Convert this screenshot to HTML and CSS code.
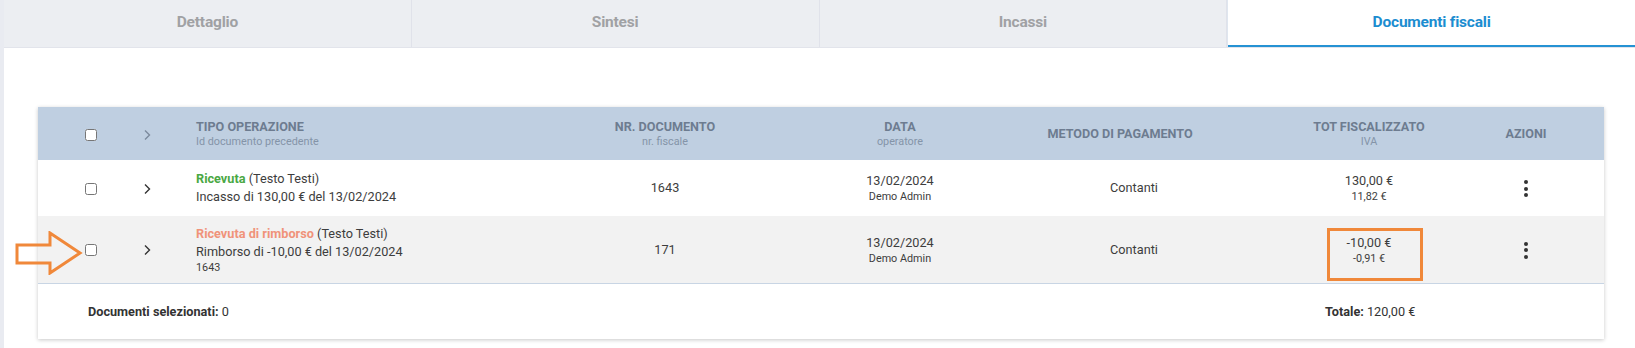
FILE: index.html
```html
<!DOCTYPE html>
<html lang="it">
<head>
  <meta charset="UTF-8">
  <meta name="viewport" content="width=device-width, initial-scale=1.0">
  <title>Documenti fiscali</title>
  <link rel="stylesheet" href="styles.css">
</head>
<body>
  <div class="page">
    <nav class="tabs">
      <div class="tab">Dettaglio</div>
      <div class="tab">Sintesi</div>
      <div class="tab">Incassi</div>
      <div class="tab active">Documenti fiscali</div>
    </nav>

    <div class="content">
      <!-- freccia di annotazione -->
      <svg class="note-arrow" width="68" height="44" viewBox="0 0 68 44">
        <polygon points="2,14 35,14 35,2 65,22 35,42 35,32 2,32" fill="none" stroke="#f0883a" stroke-width="3" stroke-linejoin="miter"/>
      </svg>

      <div class="card">
        <table class="docs-table">
          <colgroup>
            <col class="c-check">
            <col class="c-expand">
            <col class="c-tipo">
            <col class="c-nr">
            <col class="c-data">
            <col class="c-metodo">
            <col class="c-tot">
            <col class="c-azioni">
          </colgroup>
          <thead>
            <tr>
              <th class="cell-check"><input type="checkbox"></th>
              <th><svg class="chev" width="8" height="12" viewBox="0 0 8 12"><polyline points="2,1.5 6.5,6 2,10.5" fill="none" stroke="currentColor" stroke-width="1.4"/></svg></th>
              <th class="left">TIPO OPERAZIONE<span class="sub">Id documento precedente</span></th>
              <th>NR. DOCUMENTO<span class="sub">nr. fiscale</span></th>
              <th>DATA<span class="sub">operatore</span></th>
              <th>METODO DI PAGAMENTO</th>
              <th class="cell-tot">TOT FISCALIZZATO<span class="sub">IVA</span></th>
              <th class="cell-last">AZIONI</th>
            </tr>
          </thead>
          <tbody>
            <tr class="row-1">
              <td class="cell-check"><input type="checkbox"></td>
              <td><svg class="chev dark" width="8" height="12" viewBox="0 0 8 12"><polyline points="2,1.5 6.5,6 2,10.5" fill="none" stroke="currentColor" stroke-width="1.4"/></svg></td>
              <td class="left">
                <div><span class="tipo green">Ricevuta</span> (Testo Testi)</div>
                <div>Incasso di 130,00 € del 13/02/2024</div>
              </td>
              <td>1643</td>
              <td>13/02/2024<span class="small">Demo Admin</span></td>
              <td class="cell-metodo">Contanti</td>
              <td class="cell-tot">130,00 €<span class="small">11,82 €</span></td>
              <td class="cell-last"><span class="kebab"><i></i><i></i><i></i></span></td>
            </tr>
            <tr class="row-2">
              <td class="cell-check"><input type="checkbox"></td>
              <td><svg class="chev dark" width="8" height="12" viewBox="0 0 8 12"><polyline points="2,1.5 6.5,6 2,10.5" fill="none" stroke="currentColor" stroke-width="1.4"/></svg></td>
              <td class="left">
                <div><span class="tipo salmon">Ricevuta di rimborso</span> (Testo Testi)</div>
                <div>Rimborso di -10,00 € del 13/02/2024</div>
                <div class="small">1643</div>
              </td>
              <td>171</td>
              <td>13/02/2024<span class="small">Demo Admin</span></td>
              <td class="cell-metodo">Contanti</td>
              <td class="cell-tot">-10,00 €<span class="small">-0,91 €</span></td>
              <td class="cell-last"><span class="kebab"><i></i><i></i><i></i></span></td>
            </tr>
          </tbody>
        </table>

        <div class="table-footer">
          <span><strong>Documenti selezionati:</strong> 0</span>
          <span><strong>Totale:</strong> 120,00 €</span>
        </div>

        <!-- riquadro di evidenziazione -->
        <div class="note-box"></div>
      </div>
    </div>
  </div>
</body>
</html>
```

FILE: styles.css
```css
body {
  margin: 0;
  font-family: Roboto, "Liberation Sans", Arial, sans-serif;
  background-color: #e9ebf1;
  color: #3a3a3a;
}

.page {
  margin-left: 4px;
  background-color: #fff;
  min-height: 100vh;
}

/* tabs */
.tabs {
  display: flex;
  height: 48px;
  box-sizing: border-box;
  border-bottom: 1px solid #e2e4eb;
  background-color: #eceef2;
}

.tab {
  flex: 1;
  display: flex;
  align-items: center;
  justify-content: center;
  padding-bottom: 3px;
  font-size: 15.5px;
  font-weight: 700;
  letter-spacing: -0.2px;
  color: #a0a1a4;
  border-right: 1px solid #e0e2ea;
}

.tab.active {
  background-color: #fff;
  color: #1c8dd0;
  border-right: none;
  border-left: 1px solid #dfe6ef;
  box-shadow: inset 0 -2px 0 #2592d3;
}

/* content */
.content {
  position: relative;
  padding: 59px 31px 0 34px;
}

.card {
  position: relative;
  background-color: #fff;
  box-shadow: 0 1px 4px rgba(0, 0, 0, 0.22);
}

.docs-table {
  width: 100%;
  border-collapse: collapse;
  table-layout: fixed;
}

.c-check { width: 83px; }
.c-expand { width: 52px; }
.c-tipo { width: 375px; }
.c-nr { width: 234px; }
.c-data { width: 236px; }
.c-metodo { width: 204px; }
.c-tot { width: 228px; }
.c-azioni { width: 154px; }

th, td {
  padding: 0;
  text-align: center;
  vertical-align: middle;
}

th {
  height: 53px;
  background-color: #bfcfe1;
  font-size: 12.6px;
  font-weight: 700;
  line-height: 15px;
  color: #6d7c90;
}

th .sub {
  display: block;
  font-size: 10.8px;
  font-weight: 400;
  color: #8494a8;
}

th.left, td.left {
  text-align: left;
  padding-left: 23px;
}

.cell-check {
  padding-left: 23px;
}

.cell-metodo {
  padding-left: 28px;
}

.cell-tot {
  padding-left: 66px;
}

.cell-last {
  padding-right: 2px;
}

input[type="checkbox"] {
  margin: 0;
  width: 12px;
  height: 12px;
  vertical-align: middle;
}

.chev {
  display: inline-block;
  vertical-align: middle;
  color: #7c8a9c;
}

.chev.dark {
  color: #333;
}

td {
  font-size: 12.7px;
  line-height: 18px;
  color: #3d3d3d;
}

.row-1 td {
  height: 56px;
}

.row-2 td {
  height: 67px;
  background-color: #f2f2f2;
  border-bottom: 1px solid #c8d5e4;
}

td .small {
  display: block;
  font-size: 10.8px;
  line-height: 14px;
}

.tipo {
  font-weight: 700;
}

.green {
  color: #4aa843;
}

.salmon {
  color: #f0937a;
}

.kebab {
  display: inline-flex;
  flex-direction: column;
  gap: 2.5px;
  vertical-align: middle;
}

.kebab i {
  width: 4px;
  height: 4px;
  border-radius: 50%;
  background-color: #333;
}

.table-footer {
  display: grid;
  grid-template-columns: 1fr 279px;
  align-items: center;
  height: 55px;
  padding-left: 50px;
  font-size: 12.7px;
  color: #333;
}

.table-footer strong {
  font-weight: 700;
}

/* annotazioni */
.note-box {
  position: absolute;
  left: 1289px;
  top: 121px;
  width: 90px;
  height: 47px;
  border: 3px solid #f0883a;
}

.note-arrow {
  position: absolute;
  z-index: 2;
  left: 11px;
  top: 183px;
}
```
